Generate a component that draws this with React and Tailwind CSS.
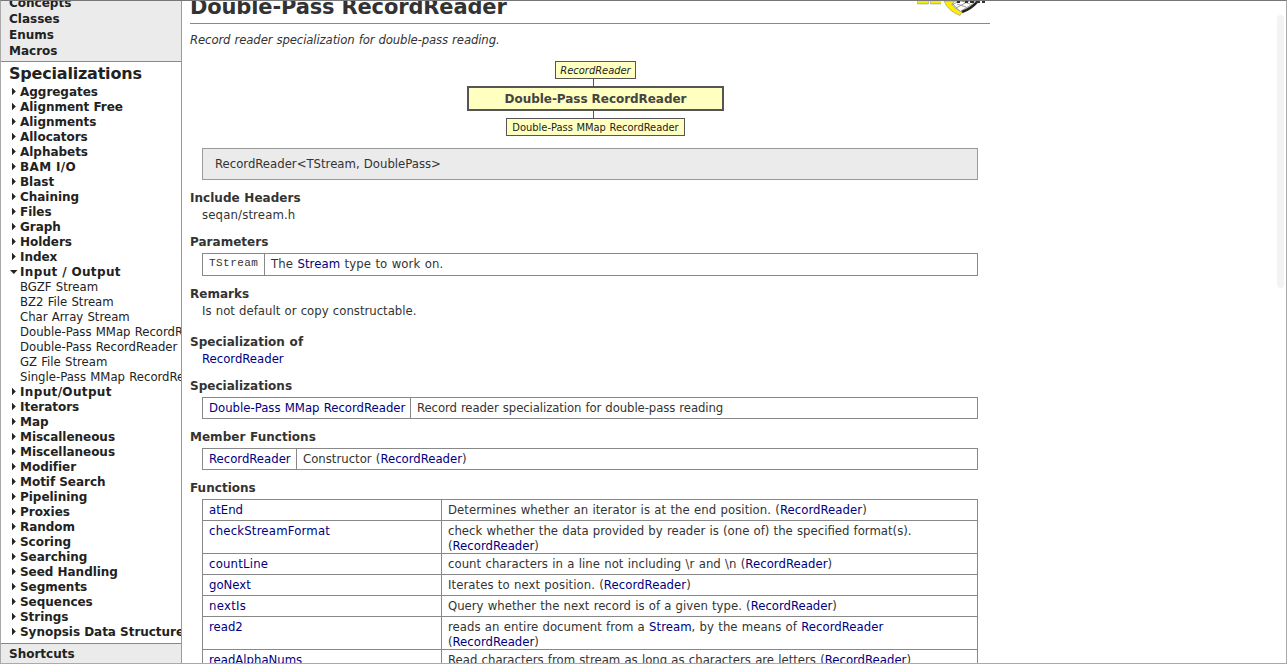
const topLinks = ["Concepts", "Classes", "Enums", "Macros"];

const tree = [
  ["Aggregates"], ["Alignment Free"], ["Alignments"], ["Allocators"], ["Alphabets"],
  ["BAM I/O"], ["Blast"], ["Chaining"], ["Files"], ["Graph"], ["Holders"], ["Index"],
  ["Input / Output", [
    "BGZF Stream", "BZ2 File Stream", "Char Array Stream", "Double-Pass MMap RecordReader",
    "Double-Pass RecordReader", "GZ File Stream", "Single-Pass MMap RecordReader",
  ]],
  ["Input/Output"], ["Iterators"], ["Map"], ["Miscalleneous"], ["Miscellaneous"],
  ["Modifier"], ["Motif Search"], ["Pipelining"], ["Proxies"], ["Random"], ["Scoring"],
  ["Searching"], ["Seed Handling"], ["Segments"], ["Sequences"], ["Strings"],
  ["Synopsis Data Structures"],
];

const REG = "font-['DejaVu_Sans_Condensed','DejaVu_Sans',sans-serif] [font-stretch:condensed] text-[13px] leading-[15px] tracking-[0px] [word-spacing:0.5px]";
const BOLD = "font-['DejaVu_Sans',sans-serif] [font-stretch:normal] font-bold text-[12px] leading-[16px]";

function Arrow({ open }) {
  return (
    <svg className="h-[9px] w-[11px] shrink-0" viewBox="0 0 11 9" fill="#222">
      {open ? <path d="M1 3h7.500L4.800 7z" /> : <path d="M3 .8v7.400L6.800 4.500z" />}
    </svg>
  );
}

function Link({ children }) {
  return <a className="text-[#000080]">{children}</a>;
}

function Heading({ children }) {
  return <h2 className={`${BOLD} tracking-[0.02px] text-[#333]`}>{children}</h2>;
}

function Row({ w, name, children, tall }) {
  return (
    <div className={`flex border-b border-[#888] ${tall ? "h-[33px]" : "h-[21px]"}`}>
      <div className={`${w} shrink-0 border-r border-[#888] pt-[2px] pl-[6px]`}>{name}</div>
      <div className="pt-[2px] pl-[6px] whitespace-nowrap">{children}</div>
    </div>
  );
}

function Table({ children }) {
  return <div className="mt-[3px] ml-3 w-[776px] border border-b-0 border-[#888]">{children}</div>;
}

function Logo() {
  return (
    <svg className="absolute top-0 left-[725px] h-[16px] w-[75px]" viewBox="0 0 75 16">
      <path d="M4 0V1.500H12V0M17 0V1.500H26" fill="none" stroke="#999" strokeWidth="3.400" />
      <path d="M4 0V1.300H12V0M17 0V1.300H26" fill="none" stroke="#f5ee00" strokeWidth="2.400" />
      <path d="M36 0Q40 7 46 11L58 4L63 0Z" fill="#fff" stroke="#555" strokeWidth=".7" />
      <path d="M37 4L44 0M41 7L54 0M46 10L59 2M42 3L51 6M47 0L55 3" stroke="#888" strokeWidth=".8" />
      <path d="M47 11Q56 8 62 1" fill="none" stroke="#222" strokeWidth="2.600" />
      <path d="M29 0Q33 10 45 14.500L47 11Q38 7 36.500 3L39 1V0Z" fill="#ffed00" stroke="#999" strokeWidth=".7" />
      <path d="M42 .5H45M50 .5H53M55 .5H59M61 .5H65M67 .5H70" stroke="#333" strokeWidth="3" />
    </svg>
  );
}

export default function App() {
  return (
    <div className="flex h-[664px] w-[1287px] overflow-hidden border border-[#aaa] border-t-[#777] bg-white">
      <aside className="flex h-full w-[181px] shrink-0 flex-col overflow-hidden border-r border-[#999] text-[#222]">
        <div className={`flex h-[61px] shrink-0 flex-col justify-end border-b border-[#888] bg-[#ebebeb] pb-[2px] pl-2 ${BOLD}`}>
          {topLinks.map((t) => <div key={t} className="shrink-0">{t}</div>)}
        </div>
        <h3 className="h-[22px] shrink-0 pl-2 font-['DejaVu_Sans',sans-serif] text-[16px] leading-[23px] font-bold tracking-[-0.2px]">Specializations</h3>
        <div className="h-[559px] shrink-0">
          {tree.map(([name, kids]) => (
            <div key={name}>
              <div className="flex h-[15px] items-center pl-2">
                <Arrow open={!!kids} />
                <span className={`whitespace-nowrap ${BOLD} ${name.includes("/") ? "tracking-[0.35px]" : "tracking-[-0.03px]"}`}>{name}</span>
              </div>
              {kids && kids.map((k) => (
                <div key={k} className={`h-[15px] pl-[19px] whitespace-nowrap ${REG}`}>{k}</div>
              ))}
            </div>
          ))}
        </div>
        <div className={`h-[21px] shrink-0 border-t border-[#888] bg-[#ebebeb] pt-[2px] pl-2 ${BOLD}`}>Shortcuts</div>
      </aside>

      <main className={`relative h-full min-w-0 flex-1 overflow-hidden pl-2 text-[#333] ${REG}`}>
        <div className="relative flex h-[23px] w-[800px] items-end border-b border-[#888]">
          <h1 className="mb-[3px] font-['DejaVu_Sans',sans-serif] text-[21px] leading-[26px] font-bold tracking-[-0.15px] [font-stretch:normal] [word-spacing:0px]">Double-Pass RecordReader</h1>
          <Logo />
        </div>
        <p className="mt-2 h-[15px] tracking-[-0.12px] italic">Record reader specialization for double-pass reading.</p>

        <div className="mt-[14px] flex w-[811px] flex-col items-center text-[11px] tracking-normal text-[#222]">
          <div className="h-[18px] w-[81px] border border-[#555] bg-[#ffffc0] text-center leading-[17px] whitespace-nowrap italic">RecordReader</div>
          <div className="mr-1 h-[7px] w-px bg-[#555]" />
          <div className="h-[25px] w-[257px] border-2 border-[#555] bg-[#ffffc0] text-center font-['DejaVu_Sans',sans-serif] text-[12px] leading-[22px] font-bold tracking-[-0.05px] text-[#444] [font-stretch:normal] [word-spacing:0px]">Double-Pass RecordReader</div>
          <div className="mr-1 h-[7px] w-px bg-[#555]" />
          <div className="h-[18px] w-[179px] border border-[#555] bg-[#ffffc0] text-center leading-[17px] whitespace-nowrap">Double-Pass MMap RecordReader</div>
        </div>

        <div className="mt-[12px] ml-3 h-[32px] w-[776px] border border-[#999] bg-[#ebebeb] pt-[7px] pl-3">RecordReader&lt;TStream, DoublePass&gt;</div>

        <div className="mt-[10px]"><Heading>Include Headers</Heading></div>
        <p className="mt-px h-[15px] pl-3 tracking-[0.15px]">seqan/stream.h</p>

        <div className="mt-[12px]"><Heading>Parameters</Heading></div>
        <div className="mt-[3px] ml-3 flex h-[23px] w-[776px] border border-[#888]">
          <div className="w-[62px] shrink-0 border-r border-[#888] pt-[2px] pl-[6px] font-['Liberation_Mono',monospace] text-[11px] tracking-[0.45px]">TStream</div>
          <div className="pt-[2px] pl-[6px] tracking-[0.1px]">The <Link>Stream</Link> type to work on.</div>
        </div>

        <div className="mt-[10px]"><Heading>Remarks</Heading></div>
        <p className="mt-px h-[15px] pl-3">Is not default or copy constructable.</p>

        <div className="mt-[16px]"><Heading>Specialization of</Heading></div>
        <p className="mt-px h-[15px] pl-3"><Link>RecordReader</Link></p>

        <div className="mt-[12px]"><Heading>Specializations</Heading></div>
        <Table>
          <Row w="w-[208px]" name={<Link>Double-Pass MMap RecordReader</Link>}><span className="tracking-[-0.09px]">Record reader specialization for double-pass reading</span></Row>
        </Table>

        <div className="mt-[10px]"><Heading>Member Functions</Heading></div>
        <Table>
          <Row w="w-[94px]" name={<Link>RecordReader</Link>}>Constructor (<Link>RecordReader</Link>)</Row>
        </Table>

        <div className="mt-[10px]"><Heading>Functions</Heading></div>
        <Table>
          <Row w="w-[239px]" name={<Link>atEnd</Link>}><span className="tracking-[0.05px]">Determines whether an iterator is at the end position. (<Link>RecordReader</Link>)</span></Row>
          <Row w="w-[239px]" tall name={<span className="tracking-[0.2px]"><Link>checkStreamFormat</Link></span>}>check whether the data provided by reader is (one of) the specified format(s).<br />(<Link>RecordReader</Link>)</Row>
          <Row w="w-[239px]" name={<span className="tracking-[0.2px]"><Link>countLine</Link></span>}><span className="tracking-[0.04px]">count characters in a line not including \r and \n (<Link>RecordReader</Link>)</span></Row>
          <Row w="w-[239px]" name={<Link>goNext</Link>}><span className="tracking-[0.06px]">Iterates to next position. (<Link>RecordReader</Link>)</span></Row>
          <Row w="w-[239px]" name={<span className="tracking-[0.3px]"><Link>nextIs</Link></span>}>Query whether the next record is of a given type. (<Link>RecordReader</Link>)</Row>
          <Row w="w-[239px]" tall name={<Link>read2</Link>}><span className="tracking-[0.04px]">reads an entire document from a <Link>Stream</Link>, by the means of <Link>RecordReader</Link></span><br />(<Link>RecordReader</Link>)</Row>
          <Row w="w-[239px]" name={<Link>readAlphaNums</Link>}>Read characters from stream as long as characters are letters (<Link>RecordReader</Link>)</Row>
        </Table>
        <div className="absolute top-[14px] right-[2px] h-[273px] w-[7px] rounded-full bg-[#f3f3f3]" />
      </main>
    </div>
  );
}
